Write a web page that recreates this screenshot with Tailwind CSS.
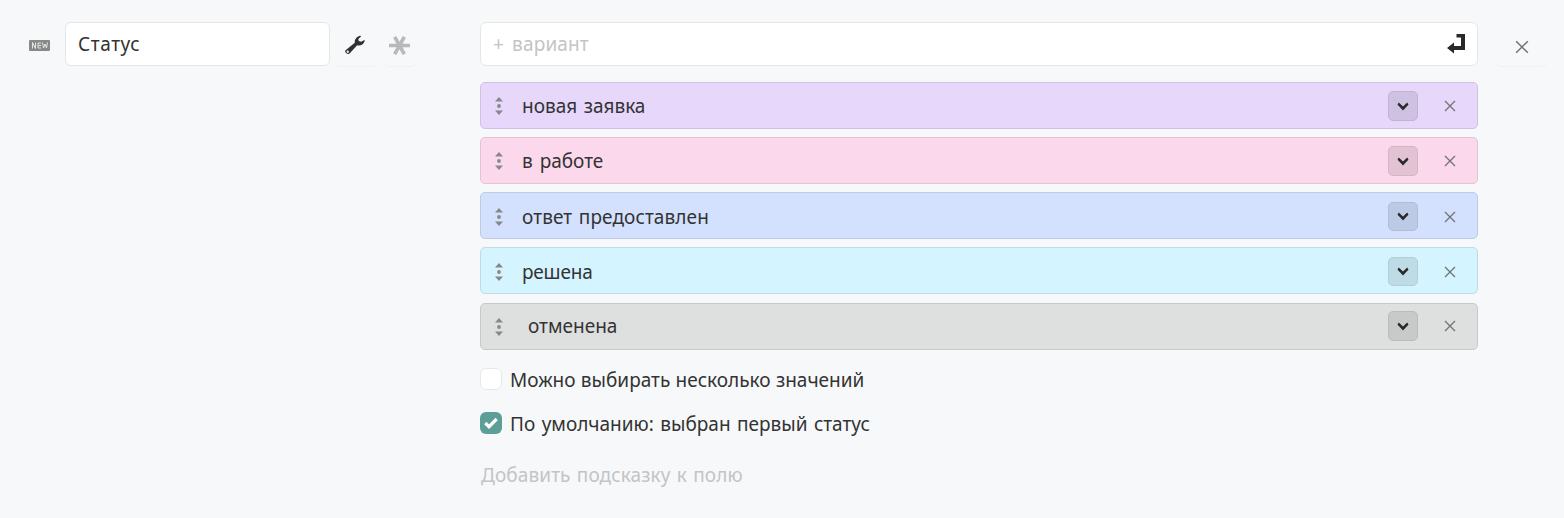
<!DOCTYPE html>
<html lang="ru">
<head>
<meta charset="utf-8">
<title>Статус</title>
<script src="https://cdn.jsdelivr.net/npm/@tailwindcss/browser@4"></script>
</head>
<body class="h-[518px] w-[1564px] overflow-hidden bg-[#f6f8fa] font-['Noto_Sans','Open_Sans',sans-serif] text-[19px] leading-6 text-[#333]">
<svg class="hidden">
  <symbol id="grip" viewBox="0 0 10 20"><path d="M1 5.500 5 1l4 4.500zM1 14.500h8L5 19z" fill="#888"/><circle cx="5" cy="10" r="1.900" fill="#888"/></symbol>
  <symbol id="chev" viewBox="0 0 12 10"><path d="M1.100 1.600C2.300 2.200 4.300 4.800 6 6.600 7.700 4.800 9.700 2.200 10.900 1.600" fill="none" stroke="#292929" stroke-width="2.600"/></symbol>
  <symbol id="x" viewBox="0 0 12 12"><path d="M1 1l10 10M11 1 1 11" fill="none" stroke="#727272" stroke-width="1.300"/></symbol>
</svg>
<main class="flex h-full pt-[22px]">
  <section class="flex w-[480px] items-start">
    <svg class="mt-[18px] ml-[29px] h-[11px] w-[21px]" viewBox="0 0 21 11"><rect width="21" height="11" rx="1" fill="#878987"/><path d="M3.500 8.500v-6l3 6v-6M12 3H9v5h3M9 5.500h3M13.500 2.500l1 5.500 1.500-4 1.500 4 1-5.500" fill="none" stroke="#e3e6e7" stroke-width="1"/></svg>
    <div class="ml-[15px] flex h-11 w-[265px] items-center rounded-md border border-[#e5e6e8] bg-white pl-3"><span class="tracking-[0.600px] whitespace-nowrap">Статус</span></div>
    <div class="ml-[2px] flex h-[45px] w-12 items-start rounded-lg border-b border-[#eff1f3] pt-[13px] pl-[13px]">
      <svg class="h-5 w-5" viewBox="0 0 20 20"><path fill="#303030" fill-rule="evenodd" d="M.6 15.200 9.800 7.800C9.300 4.500 11.500 1.500 15.500.7L16 1.500 13.300 3.900 13.800 6 16.200 6.700 19.300 5.100 19.700 5.900C18.500 9.500 15.500 11 12.200 10.300L4.800 18.300C2.900 20.200-1.200 17.200.6 15.200ZM2.700 15.600a1.200 1.200 0 1 0 .1 2.400 1.200 1.200 0 0 0-.1-2.400Z"/></svg>
    </div>
    <div class="ml-[3px] flex h-[45px] w-[35px] items-start rounded-lg border-b border-[#eff1f3] pt-[13px] pl-[6px]">
      <svg class="h-5 w-[21px]" viewBox="0 0 21 20"><path d="M0 10.500h21M5.700 1.800l9.600 17.400M15.300 1.800l-9.600 17.400" stroke="#b7b9ba" stroke-width="3.600"/></svg>
    </div>
  </section>
  <section class="w-[998px]">
    <div class="flex h-11 items-center rounded-md border border-[#e5e6e8] bg-white pr-[12px] pl-3 text-[#c4c4c4]"><span class="grow tracking-[0.150px] [word-spacing:3px]">+ вариант</span>
      <svg class="h-5 w-[18px]" viewBox="0 0 18 20"><path fill="#292929" d="M9.500 0H18v16H7v3.500L0 14l7-5.500V12h7V3.500H9.500z"/></svg>
    </div>
    <div class="mt-[15.700px] flex flex-col gap-[8.250px]">
      <div class="flex h-[47px] items-center rounded-[5px] border border-[#cfc2e3] bg-[#e6d7fb] pt-px pr-[21px] pl-[13px]"><svg class="mt-[1px] h-5 w-[10px]"><use href="#grip"/></svg><span class="mt-px ml-[18px] grow [word-spacing:1.500px]">новая заявка</span><span class="flex h-[30px] w-[30px] items-center justify-center rounded-[5px] border border-[#c1b4d3] bg-[#cfc1e2]"><svg class="mt-[2px] h-[10px] w-3"><use href="#chev"/></svg></span><svg class="mt-px ml-[26px] h-3 w-3"><use href="#x"/></svg></div>
      <div class="flex h-[47px] items-center rounded-[5px] border border-[#e3c3d4] bg-[#fcd8ec] pt-px pr-[21px] pl-[13px]"><svg class="mt-[1px] h-5 w-[10px]"><use href="#grip"/></svg><span class="mt-px ml-[18px] grow [word-spacing:2px]">в работе</span><span class="flex h-[30px] w-[30px] items-center justify-center rounded-[5px] border border-[#d3b5c6] bg-[#e3c2d4]"><svg class="mt-[2px] h-[10px] w-3"><use href="#chev"/></svg></span><svg class="mt-px ml-[26px] h-3 w-3"><use href="#x"/></svg></div>
      <div class="flex h-[47px] items-center rounded-[5px] border border-[#bdcbe5] bg-[#d3e1ff] pt-px pr-[21px] pl-[13px]"><svg class="mt-[1px] h-5 w-[10px]"><use href="#grip"/></svg><span class="mt-px ml-[18px] grow tracking-[0.100px] [word-spacing:1.500px]">ответ предоставлен</span><span class="flex h-[29px] w-[30px] items-center justify-center rounded-[5px] border border-[#b1bdd6] bg-[#bdcae5]"><svg class="mt-[2px] h-[10px] w-3"><use href="#chev"/></svg></span><svg class="mt-px ml-[26px] h-3 w-3"><use href="#x"/></svg></div>
      <div class="flex h-[47px] items-center rounded-[5px] border border-[#bfdce5] bg-[#d4f5ff] pt-px pr-[21px] pl-[13px]"><svg class="mt-[1px] h-5 w-[10px]"><use href="#grip"/></svg><span class="mt-px ml-[18px] grow tracking-[-0.200px]">решена</span><span class="flex h-[29px] w-[30px] items-center justify-center rounded-[5px] border border-[#b2ced6] bg-[#bedce5]"><svg class="mt-[2px] h-[10px] w-3"><use href="#chev"/></svg></span><svg class="mt-[2px] ml-[26px] h-3 w-3"><use href="#x"/></svg></div>
      <div class="flex h-[47px] items-center rounded-[5px] border border-[#c8caca] bg-[#dee0df] pr-[21px] pl-[13px]"><svg class="mt-[2px] h-5 w-[10px]"><use href="#grip"/></svg><span class="ml-[24px] grow">отменена</span><span class="flex h-[30px] w-[30px] items-center justify-center rounded-[5px] border border-[#bbbcbb] bg-[#c8cac9]"><svg class="mt-[2px] h-[10px] w-3"><use href="#chev"/></svg></span><svg class="ml-[26px] h-3 w-3"><use href="#x"/></svg></div>
    </div>
    <div class="mt-[18.300px] flex h-6 items-center gap-2"><span class="mb-[2px] h-[22px] w-[22px] rounded-md border border-[#e6e8ea] bg-white"></span><span class="[word-spacing:0.400px]">Можно выбирать несколько значений</span></div>
    <div class="mt-[20px] flex h-6 items-center gap-2"><span class="mb-[2px] flex h-[22px] w-[22px] items-center justify-center rounded-md bg-[#5b9f98]"><svg class="h-3 w-[14px]" viewBox="0 0 14 12"><path d="M1.300 6 5 9.700 12.700 2" fill="none" stroke="#fff" stroke-width="3.200"/></svg></span><span class="[word-spacing:1.500px]">По умолчанию: выбран первый статус</span></div>
    <div class="mt-[27px] pl-px tracking-[0.100px] text-[#c4c4c4] [word-spacing:1.200px]"><span>Добавить подсказку к полю</span></div>
  </section>
  <div class="ml-[16px] flex h-[45px] w-[55px] items-start justify-center rounded-lg border-b border-[#eff1f3] pt-[18px]"><svg class="h-[14px] w-[14px]"><use href="#x"/></svg></div>
</main>
</body>
</html>
